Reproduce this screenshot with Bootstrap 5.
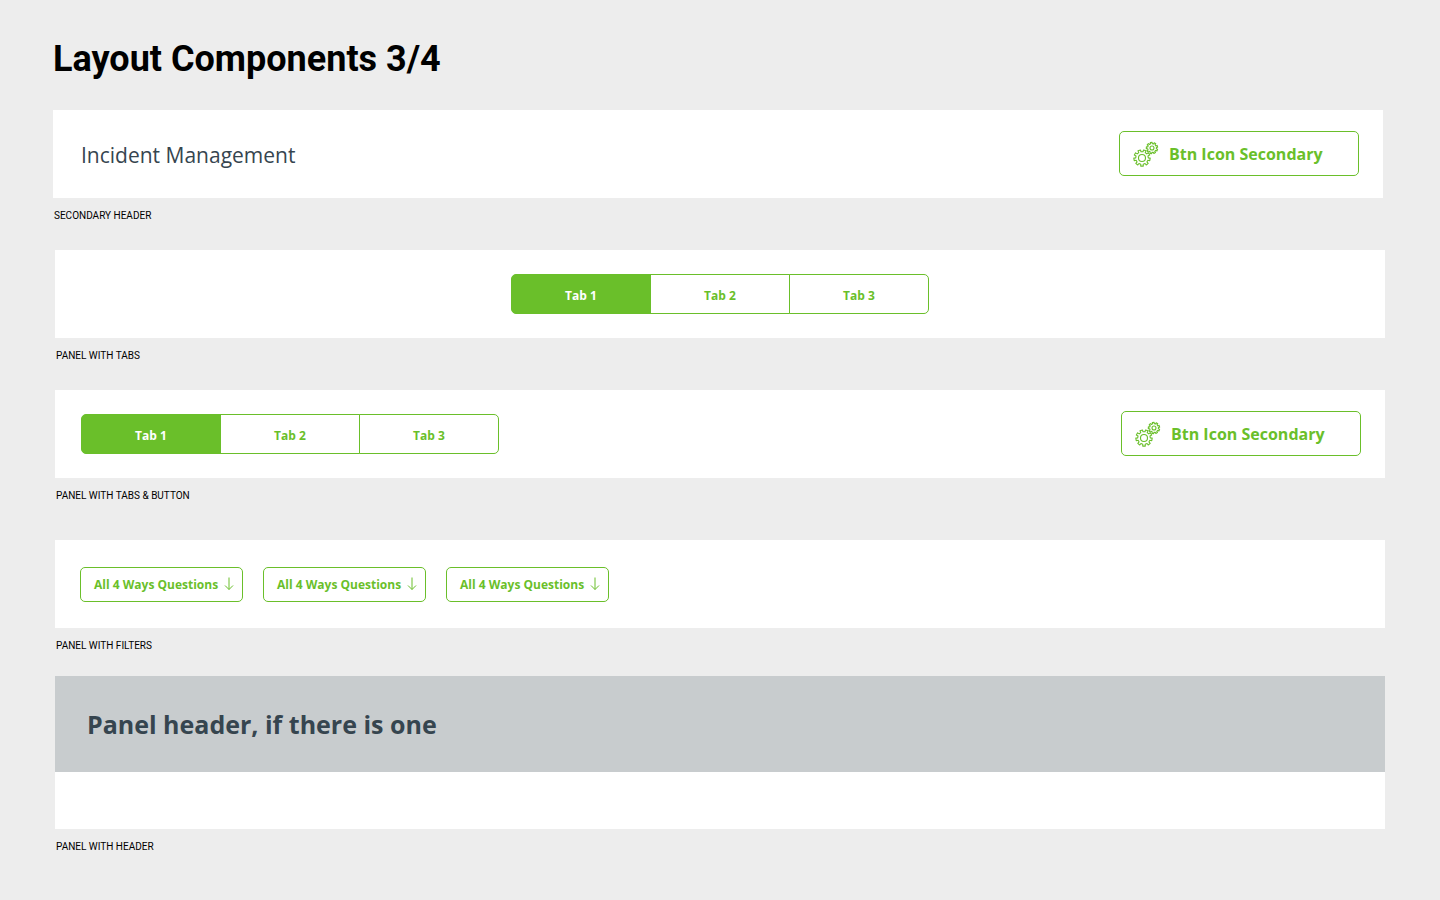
<!DOCTYPE html>
<html lang="en">
<head>
<meta charset="utf-8">
<meta name="viewport" content="width=device-width, initial-scale=1">
<title>Layout Components 3/4</title>
<link rel="stylesheet" href="https://cdn.jsdelivr.net/npm/bootstrap@5.3.0/dist/css/bootstrap.min.css">
<style>
  :root { --leaf: #6abf2a; --slate: #36454f; }
  body { background: #ededed; color: #000; font-family: "Open Sans", sans-serif; }
  .sheet-top { padding: 37px 57px 0 53px; }
  .sheet-main { padding: 0 55px 32px; }
  .sheet-title { font: 700 36px/44px Roboto, sans-serif; margin-bottom: 29px; }
  .panel { min-height: 88px; padding: 0 24px 0 26px; background: #fff; }
  .panel-centered { padding: 0 24px; }
  .panel-filters { padding: 0 25px; }
  .filter-set { gap: 20px; }
  .panel-label { font: 400 10px/16px Roboto, sans-serif; padding: 10px 1px 0; margin: 0 0 26px; }
  .gap-large { margin-bottom: 36px; }
  .gap-small { margin-bottom: 22px; }
  .screen-name { font-size: 21px; line-height: 32px; color: var(--slate); font-weight: 400; padding: 2px 2px 0; }
  .btn-leaf {
    --bs-btn-color: var(--leaf); --bs-btn-border-color: var(--leaf); --bs-btn-bg: #fff;
    --bs-btn-hover-color: #fff; --bs-btn-hover-bg: var(--leaf); --bs-btn-hover-border-color: var(--leaf);
    --bs-btn-active-color: #fff; --bs-btn-active-bg: var(--leaf); --bs-btn-active-border-color: var(--leaf);
    --bs-btn-font-weight: 700; --bs-btn-border-radius: 5px;
  }
  .btn-icon { width: 240px; height: 45px; padding: 0 13px; gap: 10px; font-size: 16px; line-height: 24px; margin-bottom: 1px; }
  .btn-icon span { padding-top: 1px; }
  .tab-set { width: 418px; height: 40px; }
  .tab-set .btn { font-size: 12px; line-height: 18px; padding: 4px 0 0; flex: 1 1 0; }
  .btn-filter { width: 163px; height: 35px; font-size: 12px; line-height: 18px; padding: 0 8px 0 13px; }
  .btn-filter span { padding-top: 2px; }
  .panel-head { background: #c8ccce; min-height: 96px; padding: 0 32px; }
  .panel-head h2 { color: var(--slate); font-size: 25px; line-height: 36px; font-weight: 700; }
  .panel-body { background: #fff; min-height: 57px; }
</style>
</head>
<body>
<svg class="d-none" aria-hidden="true">
  <symbol id="gears" viewBox="0 0 26 26">
    <defs>
      <path id="cog" vector-effect="non-scaling-stroke" d="M1.2 6.18 1.28 8.1H-1.28L-1.2 6.18-3.05 5.51-4.22 7.03-6.19 5.38-4.9 3.96-5.88 2.26-7.75 2.67-8.2.14-6.3-.11-5.96-2.05-7.66-2.94-6.37-5.16-4.75-4.13-3.24-5.4-3.98-7.17-1.56-8.05-.99-6.22H.99L1.56-8.05 3.98-7.17 3.24-5.4 4.75-4.13 6.37-5.16 7.66-2.94 5.96-2.05 6.3-.11 8.2.14 7.75 2.67 5.88 2.26 4.9 3.96 6.19 5.38 4.22 7.03 3.05 5.51Z"/>
    </defs>
    <g fill="none" stroke="currentColor" stroke-width="1.1" stroke-linejoin="round">
      <use href="#cog" transform="translate(9 17)"/>
      <circle cx="9" cy="17" r="3.5"/>
      <use href="#cog" transform="translate(19 7) rotate(12) scale(.7)"/>
      <circle cx="19" cy="7" r="2"/>
    </g>
  </symbol>
  <symbol id="arrow" viewBox="0 0 10 14">
    <path d="M5 .5V12.5M1 8.5 5 12.5 9 8.5" fill="none" stroke="currentColor"/>
  </symbol>
</svg>

<header class="sheet-top">
  <h1 class="sheet-title">Layout Components 3/4</h1>
  <section>
    <div class="panel d-flex align-items-center justify-content-between">
      <h2 class="screen-name mb-0">Incident Management</h2>
      <button type="button" class="btn btn-leaf btn-icon d-flex align-items-center"><svg width="26" height="26" aria-hidden="true"><use href="#gears"/></svg><span>Btn Icon Secondary</span></button>
    </div>
    <p class="panel-label">SECONDARY HEADER</p>
  </section>
</header>

<main class="sheet-main">
  <section>
    <div class="panel panel-centered d-flex align-items-center justify-content-center">
      <div class="btn-group tab-set" role="group" aria-label="Tabs">
        <button type="button" class="btn btn-leaf active">Tab 1</button>
        <button type="button" class="btn btn-leaf">Tab 2</button>
        <button type="button" class="btn btn-leaf">Tab 3</button>
      </div>
    </div>
    <p class="panel-label">PANEL WITH TABS</p>
  </section>

  <section>
    <div class="panel d-flex align-items-center justify-content-between">
      <div class="btn-group tab-set" role="group" aria-label="Tabs">
        <button type="button" class="btn btn-leaf active">Tab 1</button>
        <button type="button" class="btn btn-leaf">Tab 2</button>
        <button type="button" class="btn btn-leaf">Tab 3</button>
      </div>
      <button type="button" class="btn btn-leaf btn-icon d-flex align-items-center"><svg width="26" height="26" aria-hidden="true"><use href="#gears"/></svg><span>Btn Icon Secondary</span></button>
    </div>
    <p class="panel-label gap-large">PANEL WITH TABS &amp; BUTTON</p>
  </section>

  <section>
    <div class="panel panel-filters d-flex align-items-center">
      <div class="d-flex filter-set">
        <button type="button" class="btn btn-leaf btn-filter d-flex align-items-center justify-content-between"><span>All 4 Ways Questions</span><svg width="10" height="14" aria-hidden="true"><use href="#arrow"/></svg></button>
        <button type="button" class="btn btn-leaf btn-filter d-flex align-items-center justify-content-between"><span>All 4 Ways Questions</span><svg width="10" height="14" aria-hidden="true"><use href="#arrow"/></svg></button>
        <button type="button" class="btn btn-leaf btn-filter d-flex align-items-center justify-content-between"><span>All 4 Ways Questions</span><svg width="10" height="14" aria-hidden="true"><use href="#arrow"/></svg></button>
      </div>
    </div>
    <p class="panel-label gap-small">PANEL WITH FILTERS</p>
  </section>

  <section>
    <div class="panel-head d-flex align-items-center"><h2 class="mb-0">Panel header, if there is one</h2></div>
    <div class="panel-body"></div>
    <p class="panel-label mb-0">PANEL WITH HEADER</p>
  </section>
</main>
<script src="https://cdn.jsdelivr.net/npm/bootstrap@5.3.0/dist/js/bootstrap.bundle.min.js"></script>
</body>
</html>
